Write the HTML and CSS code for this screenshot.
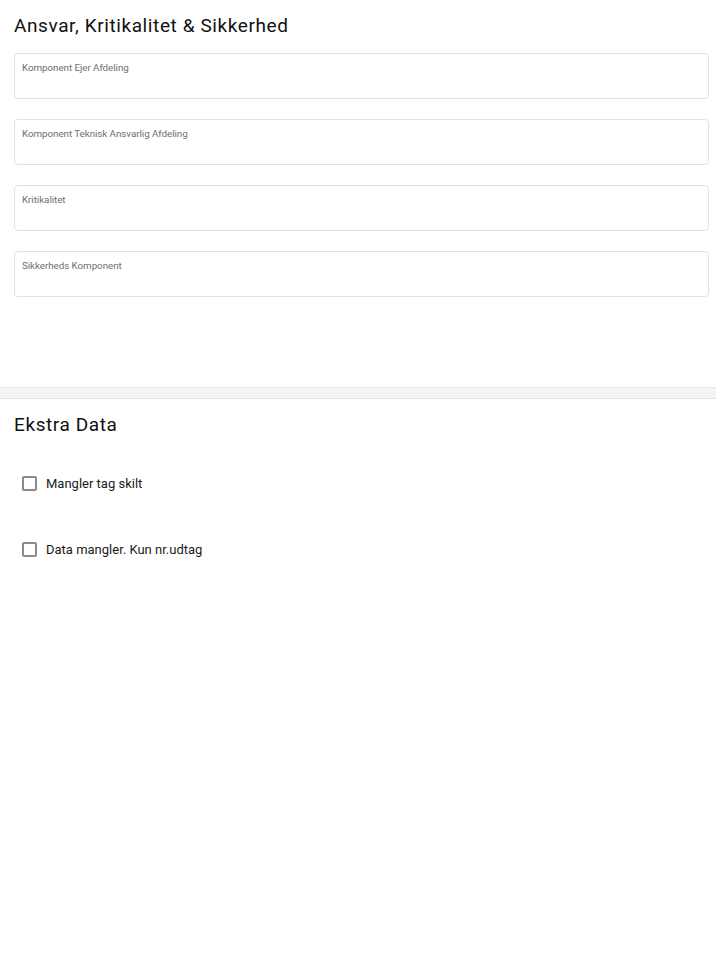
FILE: index.html
```html
<!DOCTYPE html>
<html>
<head>
<meta charset="utf-8">
<link rel="stylesheet" href="styles.css">
</head>
<body>
<section class="section first">
  <h2 class="title">Ansvar, Kritikalitet &amp; Sikkerhed</h2>
  <div class="fields">
    <div class="field"><span class="label">Komponent Ejer Afdeling</span></div>
    <div class="field"><span class="label">Komponent Teknisk Ansvarlig Afdeling</span></div>
    <div class="field"><span class="label">Kritikalitet</span></div>
    <div class="field"><span class="label">Sikkerheds Komponent</span></div>
  </div>
</section>
<div class="divider"></div>
<section class="section second">
  <h2 class="title">Ekstra Data</h2>
  <div class="checks">
    <label class="check"><span class="box"></span><span class="check-label">Mangler tag skilt</span></label>
    <label class="check"><span class="box"></span><span class="check-label">Data mangler. Kun nr.udtag</span></label>
  </div>
</section>
</body>
</html>
```
FILE: styles.css
```css
html, body {
  margin: 0;
  padding: 0;
  background: #ffffff;
  font-family: Roboto, "Liberation Sans", sans-serif;
  color: #212121;
}
.section {
  padding: 0 7px 0 14px;
}
.first {
  padding-top: 14px;
  height: 387px;
  box-sizing: border-box;
}
.title {
  margin: 0;
  font-size: 19px;
  font-weight: 400;
  letter-spacing: 0.6px;
  line-height: 24px;
  color: #111111;
}
.fields {
  margin-top: 15px;
  display: flex;
  flex-direction: column;
  gap: 20px;
}
.field {
  height: 46px;
  box-sizing: border-box;
  border: 1px solid #e2e2e2;
  border-radius: 4px;
  padding: 8px 0 0 7px;
}
.label {
  display: block;
  font-size: 9.8px;
  letter-spacing: -0.05px;
  line-height: 12px;
  color: #6f6f6f;
}
.divider {
  height: 10px;
  background: #f4f4f4;
  border-top: 1px solid #e4e4e4;
  border-bottom: 1px solid #e4e4e4;
}
.second {
  padding-top: 14px;
}
.checks {
  margin-top: 37px;
  display: flex;
  flex-direction: column;
  gap: 48px;
  padding-left: 8px;
}
.check {
  display: flex;
  align-items: center;
  gap: 9px;
  height: 18px;
}
.box {
  width: 15px;
  height: 15px;
  box-sizing: border-box;
  border: 2px solid #8a8a8a;
  border-radius: 2px;
}
.check-label {
  font-size: 13px;
  color: #1a1a1a;
}
```
